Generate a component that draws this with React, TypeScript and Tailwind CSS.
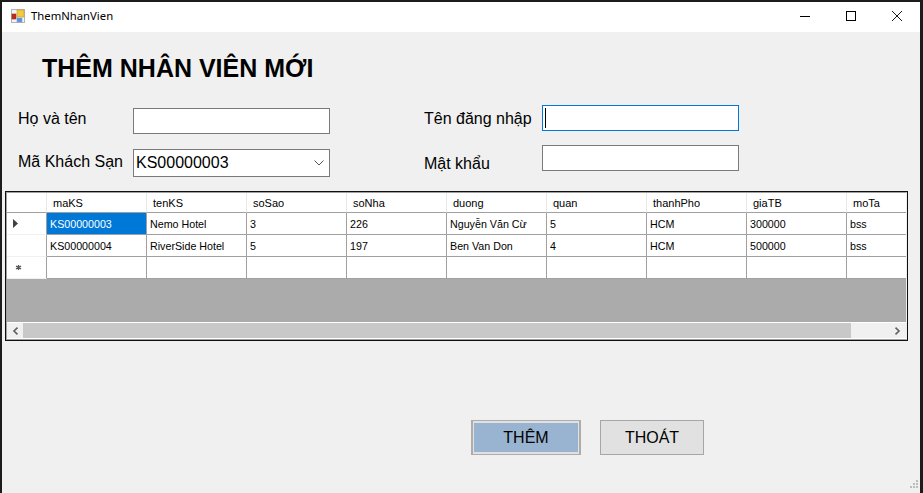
const columns = ['maKS', 'tenKS', 'soSao', 'soNha', 'duong', 'quan', 'thanhPho', 'giaTB', 'moTa'];

const rows = [
  ['KS00000003', 'Nemo Hotel', '3', '226', 'Nguyễn Văn Cừ', '5', 'HCM', '300000', 'bss'],
  ['KS00000004', 'RiverSide Hotel', '5', '197', 'Ben Van Don', '4', 'HCM', '500000', 'bss'],
  ['', '', '', '', '', '', '', '', ''],
];

function AppIcon() {
  return (
    <svg width="14" height="14" viewBox="0 0 14 14" className="shrink-0" aria-hidden>
      <rect x="0.5" y="0.5" width="13" height="13" fill="#f4f4f4" stroke="#b4b4b4" />
      <rect x="1" y="5" width="4" height="5" fill="#c8281c" stroke="#8c2a20" strokeWidth="0.6" />
      <rect x="6" y="1" width="7" height="7" fill="#f6c93f" stroke="#c09a30" strokeWidth="0.6" />
      <rect x="6" y="9" width="5" height="4" fill="#5b93e0" stroke="#7aa2d8" strokeWidth="0.6" />
    </svg>
  );
}

function WindowButtons() {
  return (
    <div className="flex h-full">
      <div className="flex h-full w-[46px] items-center justify-center pb-[2px]">
        <svg width="10" height="10" viewBox="0 0 10 10" fill="none" stroke="#000" aria-hidden>
          <path d="M0 5.5h10" />
        </svg>
      </div>
      <div className="flex h-full w-[46px] items-center justify-center pb-[2px]">
        <svg width="10" height="10" viewBox="0 0 10 10" fill="none" stroke="#000" aria-hidden>
          <rect x="0.5" y="0.5" width="9" height="9" />
        </svg>
      </div>
      <div className="flex h-full w-[46px] items-center justify-center pb-[2px]">
        <svg width="10" height="10" viewBox="0 0 10 10" fill="none" stroke="#000" strokeWidth="0.9" aria-hidden>
          <path d="M0 0l10 10M10 0L0 10" />
        </svg>
      </div>
    </div>
  );
}

function RowMarker({ index }: { index: number }) {
  return (
    <div
      className={`flex h-[22px] w-[40px] shrink-0 items-center border-r border-b border-r-[#a0a0a0] border-b-[#f0f0f0] ${
        index === 2 ? 'border-b-[#a0a0a0] pl-[8px]' : 'pl-[6px]'
      }`}
    >
      {index === 0 && (
        <svg width="6" height="9" viewBox="0 0 6 9" aria-hidden>
          <path d="M0 0l5 4.5L0 9z" fill="#404040" />
        </svg>
      )}
      {index === 2 && (
        <svg width="7" height="7" viewBox="0 0 7 7" fill="none" stroke="#555" strokeWidth="1.3" aria-hidden>
          <path d="M3.5 1v5M1 2.2l5 2.6M6 2.2L1 4.8" />
        </svg>
      )}
    </div>
  );
}

function DataGrid() {
  return (
    <div className="ml-[3px] h-[150px] w-[903px] overflow-hidden border border-[#101010] text-black">
      <div className="flex h-full flex-col overflow-hidden border-t border-r border-b border-l border-t-[#a0a0a0] border-r-[#f0f0f0] border-b-[#a0a0a0] border-l-[#a0a0a0] bg-white">
        <div className="flex h-[20px] shrink-0 overflow-hidden text-[11px]">
          <div className="h-[20px] w-[40px] shrink-0 border-r border-b border-r-[#e8e8e8] border-b-[#a0a0a0]" />
          {columns.map((c) => (
            <div
              key={c}
              className="flex h-[20px] w-[100px] shrink-0 items-center border-r border-b border-r-[#e8e8e8] border-b-[#a0a0a0] pt-px pl-[6px]"
            >
              {c}
            </div>
          ))}
        </div>
        {rows.map((row, r) => (
          <div key={r} className="flex h-[22px] shrink-0 overflow-hidden text-[10.7px]">
            <RowMarker index={r} />
            {row.map((cell, i) => (
              <div
                key={i}
                className={`flex h-[22px] w-[100px] shrink-0 items-center border-r border-b border-[#a0a0a0] pt-px pl-[3px] ${
                  r === 0 && i === 0 ? 'bg-[#0078d7] text-white' : ''
                }`}
              >
                {cell}
              </div>
            ))}
          </div>
        ))}
        <div className="h-[44px] shrink-0 border-b border-white bg-[#ababab]" />
        <div className="flex h-[15px] shrink-0 bg-[#f0f0f0]">
          <div className="flex h-full w-[16px] shrink-0 items-center justify-center">
            <svg width="7" height="8" viewBox="0 0 7 8" fill="none" stroke="#606060" strokeWidth="1.6" aria-hidden>
              <path d="M5.5 0.7L2 4l3.5 3.3" />
            </svg>
          </div>
          <div className="h-full w-[828px] shrink-0 bg-[#c8c8c8]" />
          <div className="flex h-full grow items-center justify-end pr-[5px]">
            <svg width="7" height="8" viewBox="0 0 7 8" fill="none" stroke="#606060" strokeWidth="1.6" aria-hidden>
              <path d="M1.5 0.7L5 4 1.5 7.3" />
            </svg>
          </div>
        </div>
      </div>
    </div>
  );
}

export default function App() {
  return (
    <div className="flex h-[493px] w-[923px] overflow-hidden bg-[#1c1c1c] pt-[2px] pr-[3px] pl-[2px] font-['Liberation_Sans',sans-serif]">
      <div className="relative flex grow flex-col bg-[#f0f0f0] text-black">
        <div className="flex h-[30px] shrink-0 items-center justify-between bg-white">
          <div className="flex items-center gap-[6px] pb-[2px] pl-[9px] font-['Noto_Sans',sans-serif] text-[11.3px]">
            <AppIcon />
            <span>ThemNhanVien</span>
          </div>
          <WindowButtons />
        </div>

        <div className="flex h-[73px] shrink-0 items-center pl-[40px] text-[25px] font-bold">THÊM NHÂN VIÊN MỚI</div>

        <div className="flex h-[72px] shrink-0 pl-[16px] text-[16px]">
          <div className="flex w-[406px] shrink-0 flex-col gap-[15px] pt-[3px]">
            <div className="flex h-[26px] items-center">
              <span className="w-[115px] pb-[4px]">Họ và tên</span>
              <div className="h-[26px] w-[197px] border border-[#7a7a7a] bg-white" />
            </div>
            <div className="flex h-[28px] items-center">
              <span className="w-[115px] pb-[3px]">Mã Khách Sạn</span>
              <div className="flex h-[28px] w-[197px] items-center justify-between border border-[#7a7a7a] bg-white pr-[5px] pl-[2px]">
                <span>KS00000003</span>
                <svg width="10" height="6" viewBox="0 0 10 6" fill="none" stroke="#555" aria-hidden>
                  <path d="M0.5 0.5L5 5l4.5-4.5" />
                </svg>
              </div>
            </div>
          </div>
          <div className="flex flex-col gap-[14px]">
            <div className="flex h-[26px] items-center">
              <span className="w-[118px] pt-[2px]">Tên đăng nhập</span>
              <div className="flex h-[26px] w-[197px] items-center border border-[#0078d7] bg-white pl-[2px]">
                <div className="h-[20px] w-px bg-black" />
              </div>
            </div>
            <div className="flex h-[26px] items-center">
              <span className="w-[118px] pt-[12px]">Mật khẩu</span>
              <div className="h-[26px] w-[197px] border border-[#7a7a7a] bg-white" />
            </div>
          </div>
        </div>

        <div className="mt-[14px] shrink-0">
          <DataGrid />
        </div>

        <div className="mt-[79px] flex shrink-0 gap-[19px] pl-[469px] text-[16px]">
          <div className="h-[35px] w-[110px] border-x-2 border-y border-[#adadad] bg-[#e1e1e1] px-px py-[2px]">
            <div className="flex h-full w-full items-center justify-center bg-[#99b4d1]">THÊM</div>
          </div>
          <div className="flex h-[35px] w-[104px] items-center justify-center border border-[#a6a6a6] bg-[#e1e1e1]">
            THOÁT
          </div>
        </div>

        <svg
          width="12"
          height="12"
          viewBox="0 0 12 12"
          fill="#bcbcbc"
          className="absolute right-[0px] bottom-[1px]"
          aria-hidden
        >
          <rect x="8" y="0" width="2" height="2" />
          <rect x="5" y="3" width="2" height="2" />
          <rect x="8" y="3" width="2" height="2" />
          <rect x="2" y="6" width="2" height="2" />
          <rect x="5" y="6" width="2" height="2" />
          <rect x="8" y="6" width="2" height="2" />
        </svg>
      </div>
    </div>
  );
}
